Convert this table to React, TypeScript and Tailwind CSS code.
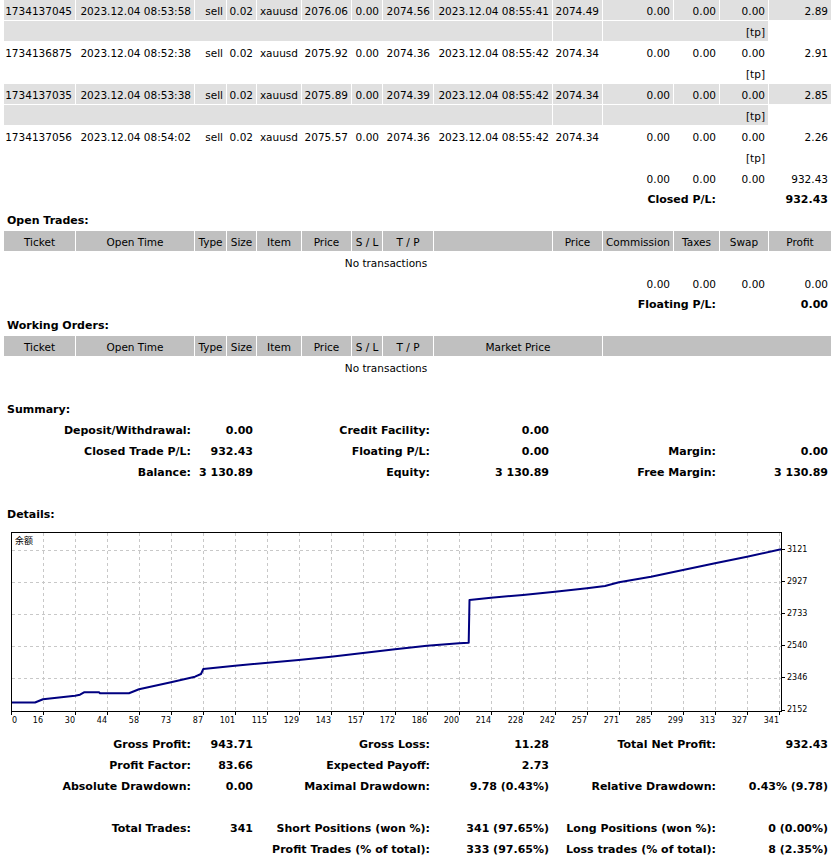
import React from 'react';

type Row = string[];

const trades: Row[] = [
  ['1734137045', '2023.12.04 08:53:58', 'sell', '0.02', 'xauusd', '2076.06', '0.00', '2074.56', '2023.12.04 08:55:41', '2074.49', '0.00', '0.00', '0.00', '2.89'],
  ['1734136875', '2023.12.04 08:52:38', 'sell', '0.02', 'xauusd', '2075.92', '0.00', '2074.36', '2023.12.04 08:55:42', '2074.34', '0.00', '0.00', '0.00', '2.91'],
  ['1734137035', '2023.12.04 08:53:38', 'sell', '0.02', 'xauusd', '2075.89', '0.00', '2074.39', '2023.12.04 08:55:42', '2074.34', '0.00', '0.00', '0.00', '2.85'],
  ['1734137056', '2023.12.04 08:54:02', 'sell', '0.02', 'xauusd', '2075.57', '0.00', '2074.36', '2023.12.04 08:55:42', '2074.34', '0.00', '0.00', '0.00', '2.26'],
];

const headCols = ['Ticket', 'Open Time', 'Type', 'Size', 'Item', 'Price', 'S / L', 'T / P'];

// summary / details blocks share the same 6-cell layout over the 14 columns
type Stat = [string, string, string, string, string, string];

const summary: Stat[] = [
  ['Deposit/Withdrawal:', '0.00', 'Credit Facility:', '0.00', '', ''],
  ['Closed Trade P/L:', '932.43', 'Floating P/L:', '0.00', 'Margin:', '0.00'],
  ['Balance:', '3 130.89', 'Equity:', '3 130.89', 'Free Margin:', '3 130.89'],
];

const details: (Stat | null)[] = [
  ['Gross Profit:', '943.71', 'Gross Loss:', '11.28', 'Total Net Profit:', '932.43'],
  ['Profit Factor:', '83.66', 'Expected Payoff:', '2.73', '', ''],
  ['Absolute Drawdown:', '0.00', 'Maximal Drawdown:', '9.78 (0.43%)', 'Relative Drawdown:', '0.43% (9.78)'],
  null,
  ['Total Trades:', '341', 'Short Positions (won %):', '341 (97.65%)', 'Long Positions (won %):', '0 (0.00%)'],
  ['', '', 'Profit Trades (% of total):', '333 (97.65%)', 'Loss trades (% of total):', '8 (2.35%)'],
];

const cell = 'h-5 leading-[22px] whitespace-nowrap overflow-hidden';

function Title({ children }: { children: React.ReactNode }) {
  return <div className={`${cell} col-span-14 pl-[3px] text-[11px] font-bold`}>{children}</div>;
}

function Blank() {
  return <div className={`${cell} col-span-14`} />;
}

function StatRow({ s }: { s: Stat }) {
  const b = `${cell} pr-[3px] text-right text-[11px] font-bold`;
  return (
    <>
      <div className={`${b} col-span-2`}>{s[0]}</div>
      <div className={`${b} col-span-2`}>{s[1]}</div>
      <div className={`${b} col-span-4`}>{s[2]}</div>
      <div className={`${b} col-span-1`}>{s[3]}</div>
      <div className={`${b} col-span-3`}>{s[4]}</div>
      <div className={`${b} col-span-2`}>{s[5]}</div>
    </>
  );
}

function Header({ working }: { working?: boolean }) {
  const h = `${cell} bg-[#c0c0c0] text-center`;
  return (
    <>
      {headCols.map((c) => (
        <div key={c} className={h}>{c}</div>
      ))}
      {working ? (
        <>
          <div className={`${h} col-span-2`}>Market Price</div>
          <div className={`${h} col-span-4`} />
        </>
      ) : (
        <>
          <div className={h} />
          <div className={h}>Price</div>
          <div className={h}>Commission</div>
          <div className={h}>Taxes</div>
          <div className={h}>Swap</div>
          <div className={h}>Profit</div>
        </>
      )}
    </>
  );
}

function Totals({ values }: { values: string[] }) {
  const r = `${cell} pr-[3px] text-right`;
  return (
    <>
      <div className={`${cell} col-span-10`} />
      {values.map((v, i) => (
        <div key={i} className={r}>{v}</div>
      ))}
    </>
  );
}

function PL({ label, value }: { label: string; value: string }) {
  const b = `${cell} pr-[3px] text-right text-[11px] font-bold`;
  return (
    <>
      <div className={`${cell} col-span-10`} />
      <div className={`${b} col-span-2`}>{label}</div>
      <div className={cell} />
      <div className={b}>{value}</div>
    </>
  );
}

const xLabels = [0, 16, 30, 44, 58, 73, 87, 101, 115, 129, 143, 157, 172, 186, 200, 214, 228, 242, 257, 271, 285, 299, 313, 327, 341];
const yLabels = ['3121', '2927', '2733', '2540', '2346', '2152'];

const balance =
  '12,702.5 35,702.5 43,699.3 75,695.7 80,694.7 84,692.3 99,692.3 100,693.3 129,693.3 139,689.3 171,682.3 195,676.7 201,674 203.3,669 235,665.7 298.7,660 331,656.7 395,649.3 427,645.7 459,643.3 468.7,642.7 469.5,600 491,597.7 523,595 555,591.7 587,588.3 605,586 619,582.3 651,576.7 683,570 715,563.3 747,556.7 781,549.3';

function Chart() {
  const gridX = Array.from({ length: 24 }, (_, i) => 43 + i * 32);
  const gridY = [550, 582, 614, 646, 678];
  return (
    <svg width={827} height={208} viewBox="4 525 827 208" className="block">
      <rect x={11.5} y={532.5} width={770} height={179} fill="#fff" stroke="#000" />
      {gridX.map((x) => (
        <g key={x}>
          <line x1={x + 0.5} y1={533} x2={x + 0.5} y2={711} stroke="#c8c8c8" strokeDasharray="3 3" />
          <line x1={x + 0.5} y1={712} x2={x + 0.5} y2={715} stroke="#000" />
        </g>
      ))}
      <line x1={11.5} y1={712} x2={11.5} y2={715} stroke="#000" />
      {gridY.map((y) => (
        <g key={y}>
          <line x1={12} y1={y + 0.5} x2={781} y2={y + 0.5} stroke="#c8c8c8" strokeDasharray="3 3" />
          <line x1={782} y1={y - 0.5} x2={785} y2={y - 0.5} stroke="#000" />
        </g>
      ))}
      <line x1={782} y1={710.5} x2={785} y2={710.5} stroke="#000" />
      <polyline points={balance} fill="none" stroke="#000080" strokeWidth={2} strokeLinejoin="round" />
      <text x={15} y={544} fontSize={9} fontFamily="'Noto Sans CJK SC', sans-serif" fill="#000">余额</text>
      {xLabels.map((v, i) => (
        <text
          key={v}
          x={i === 0 ? 12 : 11 + i * 32}
          y={723}
          fontSize={8}
          textAnchor={i === 0 ? 'start' : 'end'}
          fontFamily="'DejaVu Sans', sans-serif"
          fill="#000"
        >
          {v}
        </text>
      ))}
      {yLabels.map((v, i) => (
        <text key={v} x={787} y={552 + i * 32} fontSize={8} fontFamily="'DejaVu Sans', sans-serif" fill="#000">
          {v}
        </text>
      ))}
    </svg>
  );
}

export default function App() {
  const r = `${cell} pr-[3px] text-right`;
  return (
    <div className="min-h-[862px] w-[836px] bg-white pl-[4px] font-['DejaVu_Sans',sans-serif] text-[10.5px] text-black">
      <div className="grid grid-cols-[71px_118px_31px_29px_44px_49px_30px_50px_118px_49px_70px_45px_48px_62px] gap-px">
        {trades.map((t, i) => {
          const bg = i % 2 === 0 ? 'bg-[#e0e0e0]' : '';
          return (
            <React.Fragment key={t[0]}>
              {t.map((v, j) => (
                <div key={j} className={`${r} ${bg}`}>{v}</div>
              ))}
              <div className={`${cell} col-span-9 ${bg}`} />
              <div className={`${cell} ${bg}`} />
              <div className={`${r} col-span-3 ${bg}`}>[tp]</div>
              <div className={cell} />
            </React.Fragment>
          );
        })}
        <Totals values={['0.00', '0.00', '0.00', '932.43']} />
        <PL label="Closed P/L:" value="932.43" />

        <Title>Open Trades:</Title>
        <Header />
        <div className={`${cell} col-span-13 text-center`}>No transactions</div>
        <div className={cell} />
        <Totals values={['0.00', '0.00', '0.00', '0.00']} />
        <PL label="Floating P/L:" value="0.00" />

        <Title>Working Orders:</Title>
        <Header working />
        <div className={`${cell} col-span-13 text-center`}>No transactions</div>
        <div className={cell} />
        <Blank />

        <Title>Summary:</Title>
        {summary.map((s) => (
          <StatRow key={s[0]} s={s} />
        ))}
        <Blank />

        <Title>Details:</Title>
        <div className="col-span-14 h-[208px]">
          <Chart />
        </div>
        {details.map((s, i) => (s ? <StatRow key={i} s={s} /> : <Blank key={i} />))}
      </div>
    </div>
  );
}
